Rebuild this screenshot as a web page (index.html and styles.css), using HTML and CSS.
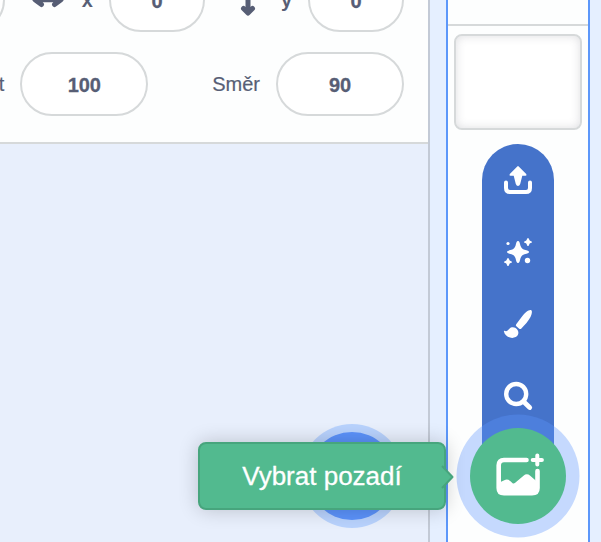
FILE: index.html
```html
<!DOCTYPE html>
<html lang="cs">
<head>
<meta charset="utf-8">
<title>Vybrat pozadí</title>
<link rel="stylesheet" href="styles.css">
</head>
<body>
<div class="app">
  <main class="sprites">
    <section class="info">
      <div class="row position">
        <div class="field name-field"></div>
        <svg class="arrow-x" width="32" height="20" viewBox="0 0 32 20"><path d="M4 9.700H28M9.500 4L3 9.700L9.500 14.500M22.500 4L29 9.700L22.500 14.500" fill="none" stroke="#575e75" stroke-width="5" stroke-linecap="round" stroke-linejoin="round"/><path d="M3 10L9.500 4.500V14.500ZM29 10L22.500 4.500V14.500Z" fill="#575e75"/></svg>
        <span class="axis">x</span>
        <div class="field short">0</div>
        <svg class="arrow-y" width="20" height="32" viewBox="0 0 20 32"><path d="M10 3V28M5.500 24.500L10 29L14.500 24.500" fill="none" stroke="#575e75" stroke-width="5" stroke-linecap="round" stroke-linejoin="round"/><path d="M5 24H15L10 29Z" fill="#575e75"/></svg>
        <span class="axis">y</span>
        <div class="field short">0</div>
      </div>
      <div class="row">
        <span class="label size-label">Velikost</span>
        <div class="field">100</div>
        <span class="label direction-label">Směr</span>
        <div class="field">90</div>
      </div>
    </section>
    <div class="sprite-button"></div>
  </main>
  <aside class="stage">
    <div class="stage-header"></div>
    <div class="costume"></div>
    <div class="menu">
      <svg width="36" height="36" viewBox="0 0 36 36"><path d="M6 20.500V26Q6 30 10 30H26Q30 30 30 26V20.500" fill="none" stroke="#fff" stroke-width="4" stroke-linecap="round"/><path d="M17.3 4.400Q18 3.700 18.700 4.400L26.200 11.900Q27.200 13.500 25.600 13.800H22.300L20.200 22Q19.400 24 18 24Q16.600 24 15.800 22L13.700 13.800H10.400Q8.800 13.500 9.800 11.900Z" fill="#fff"/></svg>
      <svg width="36" height="36" viewBox="0 0 36 36" fill="#fff"><path d="M18 7C19.400 7 19.800 9 20.400 11.500Q21.400 15.100 24.500 15.800C27.500 16.500 29 16.900 29 18S27.500 19.500 24.500 20.200Q21.400 21 20.400 24.500C19.800 27 19.400 29 18 29S16.200 27 15.600 24.500Q14.600 21 11.500 20.200C8.500 19.500 7 19.100 7 18S8.500 16.500 11.500 15.800Q14.600 15 15.600 11.500C16.200 9 16.600 7 18 7Z"/><path id="spark" d="M28 4Q28.900 4 29.200 5.500Q29.500 6.600 30.600 6.900Q32 7.200 32 8Q32 8.800 30.600 9.100Q29.500 9.400 29.200 10.500Q28.900 12 28 12Q27.100 12 26.800 10.500Q26.500 9.400 25.400 9.100Q24 8.800 24 8Q24 7.200 25.400 6.900Q26.500 6.600 26.800 5.500Q27.100 4 28 4Z"/><use href="#spark" x="-20" y="20"/><circle cx="8" cy="9.500" r="1.600"/><circle cx="27.500" cy="26.500" r="2.700"/></svg>
      <svg width="36" height="36" viewBox="0 0 36 36" fill="#fff"><path d="M31.300 4.300C29 3.300 25.400 6.500 22.200 10.300L16.200 18.200Q15.200 19.600 16.600 20.400L19.200 22.700Q20.300 23.600 21.400 22.500C24.500 19.300 28.800 14.600 30.500 11C32 7.800 32.400 4.900 31.300 4.300Z"/><path d="M4.300 24.700C6.800 26 8.100 24.200 9.400 22.800C11.400 20.600 15.200 20.900 17.200 23.400C19.300 26 18.500 29.500 15.700 31.100C11.200 33.300 4.600 30.700 3.900 25.300Q3.800 24.500 4.300 24.700Z"/></svg>
      <svg width="36" height="36" viewBox="0 0 36 36"><circle cx="16.200" cy="16" r="10" fill="none" stroke="#fff" stroke-width="4.400"/><path d="M23.500 23.500L29.700 29.500" stroke="#fff" stroke-width="4.800" stroke-linecap="round"/></svg>
    </div>
    <div class="backdrop-button">
      <svg width="60" height="60" viewBox="0 0 60 60"><path d="M36.500 14H14Q8.700 14 8.700 19.300V42Q8.700 47.300 14 47.300H42Q47.500 47.300 47.500 42V25" fill="none" stroke="#fff" stroke-width="4.600" stroke-linecap="round"/><path d="M8 37.500Q12 35 14.300 34.200Q17.800 32.500 20.800 35.500L22.600 37.200Q23.800 38 25.200 36.700L33.500 29.800Q36.800 26.900 40.200 29.800L48 36.500V43Q48 48 42 48H14Q8 48 8 43Z" fill="#fff"/><path d="M47.300 9.500V18.500M42.700 14H51.900" stroke="#fff" stroke-width="4" stroke-linecap="round"/></svg>
    </div>
    <div class="tooltip">Vybrat pozadí<svg class="tip" width="14" height="26" viewBox="0 0 14 26"><path d="M0 2H2L12.500 13L2 24H0Z" fill="#52ba8f"/><path d="M2 2L12.500 13L2 24" fill="none" stroke="#47a57d" stroke-width="2" stroke-linejoin="round"/></svg></div>
  </aside>
</div>
</body>
</html>
```
FILE: styles.css
```css
* {
  box-sizing: border-box;
}

body {
  margin: 0;
  overflow: hidden;
  background: #e5efff;
  color: #575e75;
  font-family: "Liberation Sans", Arial, sans-serif;
}

.app {
  display: flex;
  gap: 16px;
  width: 601px;
  height: 542px;
  overflow: hidden;
}

.sprites {
  position: relative;
  flex: 0 0 430px;
  overflow: hidden;
  background: #e8effc;
  border-right: 2px solid #c3cad6;
}

.info {
  display: flex;
  flex-direction: column;
  gap: 20px;
  height: 144px;
  padding-bottom: 26px;
  justify-content: flex-end;
  background: #fdfefe;
  border-bottom: 2px solid #d6d9da;
}

.row {
  display: flex;
  flex: 0 0 64px;
  align-items: center;
  justify-content: flex-end;
  padding-right: 24px;
}

.field {
  display: flex;
  flex: 0 0 128px;
  align-items: center;
  justify-content: center;
  height: 64px;
  padding-top: 2px;
  border: 2px solid #d6d9da;
  border-radius: 32px;
  background: #fff;
  font-size: 20px;
  font-weight: 700;
  letter-spacing: -0.2px;
  -webkit-text-stroke: 0.3px currentColor;
}

.short {
  flex-basis: 96px;
}

.arrow-x {
  flex: none;
  margin-left: 27px;
}

.arrow-y {
  flex: none;
  margin-left: 33px;
}

.axis {
  width: 12px;
  margin-left: 18px;
  margin-right: 16px;
  font-size: 20px;
  font-weight: 700;
  text-align: center;
}

.arrow-y + .axis {
  margin-left: 23px;
  margin-right: 16px;
}

.label {
  margin-right: 16px;
  font-size: 20px;
  -webkit-text-stroke: 0.2px currentColor;
}

.direction-label {
  width: 48px;
  margin-left: 64px;
}

.sprite-button {
  position: absolute;
  left: 308px;
  top: 432px;
  width: 88px;
  height: 88px;
  border-radius: 50%;
  background: #5b92fa;
  box-shadow: 0 0 0 8px #b8d2fd;
}

.stage {
  position: relative;
  display: flex;
  flex: 0 0 144px;
  flex-direction: column;
  align-items: center;
  background: #fdfefe;
  border: solid #5c97fa;
  border-width: 0 2px;
}

.stage-header {
  align-self: stretch;
  flex: 0 0 26px;
  border-bottom: 2px solid #d6d9da;
}

.costume {
  flex: 0 0 96px;
  width: 128px;
  margin-top: 8px;
  border: 2px solid #d6d9da;
  border-radius: 8px;
  background: #fff;
  box-shadow: inset 0 0 10px rgba(60, 60, 80, 0.17);
}

.menu {
  display: flex;
  flex: 0 0 332px;
  flex-direction: column;
  align-items: center;
  gap: 36px;
  width: 72px;
  margin-top: 14px;
  padding-top: 18px;
  border-radius: 36px 36px 0 0;
  background: #4573ca;
}

.menu svg {
  flex: none;
}

.backdrop-button {
  position: relative;
  display: flex;
  flex: 0 0 96px;
  align-items: center;
  justify-content: center;
  width: 96px;
  margin-top: -48px;
  border-radius: 50%;
  background: #52ba8f;
  box-shadow: 0 0 0 13.5px rgba(91, 148, 255, 0.35);
}

.backdrop-button svg {
  margin: -1px 0 0 4px;
}

.tooltip {
  position: absolute;
  right: 142px;
  top: 442px;
  display: flex;
  align-items: center;
  justify-content: center;
  width: 248px;
  height: 68px;
  border: 2px solid #47a57d;
  border-radius: 8px;
  background: #52ba8f;
  box-shadow: 0 0 20px rgba(0, 0, 0, 0.2);
  color: #fff;
  font-size: 26px;
  -webkit-text-stroke: 0.3px currentColor;
  white-space: nowrap;
}

.tip {
  position: absolute;
  right: -10px;
  top: 20px;
}
```
